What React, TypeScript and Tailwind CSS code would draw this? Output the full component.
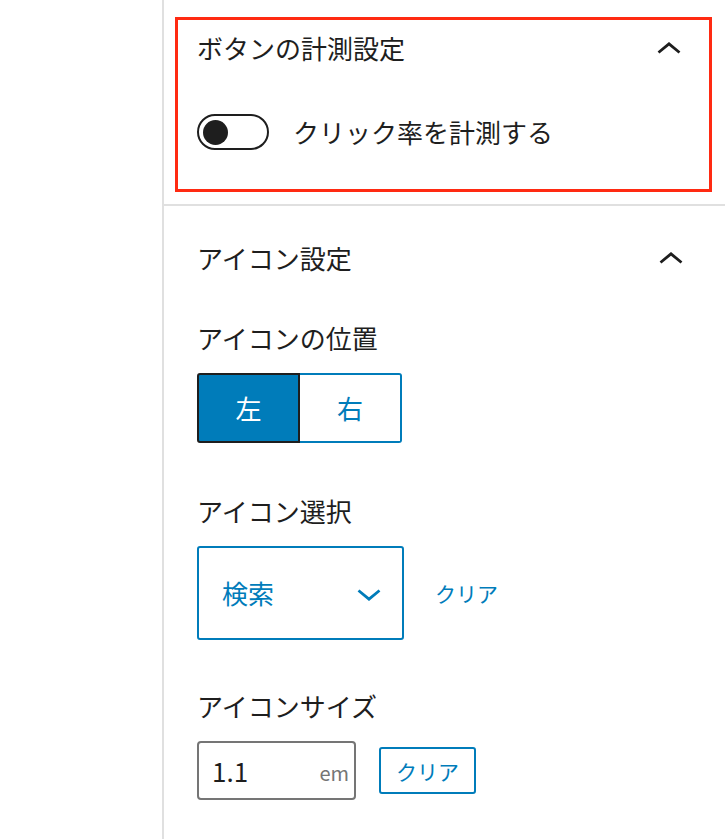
import React from "react";

function ChevronUp({ color = "#1e1e1e" }: { color?: string }) {
  return (
    <svg width="24" height="12" viewBox="0 0 24 12" fill="none">
      <path d="M1.5 10.5 L12 1.8 L22.5 10.5" stroke={color} strokeWidth="2.8" strokeLinejoin="miter" />
    </svg>
  );
}

function ChevronDown({ color = "#007cba" }: { color?: string }) {
  return (
    <svg width="24" height="12" viewBox="0 0 24 12" fill="none">
      <path d="M1.5 1.5 L12 10.2 L22.5 1.5" stroke={color} strokeWidth="2.8" strokeLinejoin="miter" />
    </svg>
  );
}

export default function App() {
  return (
    <div className="flex min-h-[839px] w-[725px] bg-white font-['Noto_Sans_CJK_JP',sans-serif] text-[#1e1e1e]">
      <div className="w-[162px] shrink-0" />
      <div className="flex-1 border-l-2 border-[#e0e0e0]">
        {/* Panel 1 */}
        <div className="border-b-2 border-[#e0e0e0] pl-[11px] pr-[13px] pt-[17px] pb-[12px]">
          <div className="border-[3px] border-[#ff2a12] pl-[19px] pr-[28px] pb-[39px]">
            <div className="flex h-[56px] items-center justify-between">
              <span className="text-[26px] leading-[36px]">ボタンの計測設定</span>
              <ChevronUp />
            </div>
            <div className="mt-[38px] flex items-center gap-[24px]">
              <div className="flex h-[36px] w-[72px] items-center rounded-full border-2 border-[#1e1e1e] pl-[4px]">
                <div className="h-[25px] w-[25px] rounded-full bg-[#1e1e1e]" />
              </div>
              <span className="text-[26px] leading-[36px]">クリック率を計測する</span>
            </div>
          </div>
        </div>

        {/* Panel 2 */}
        <div className="pl-[33px] pr-[42px] pt-[24px]">
          <div className="flex h-[56px] items-center justify-between">
            <span className="text-[26px] leading-[36px]">アイコン設定</span>
            <ChevronUp />
          </div>

          <div className="mt-[34px] text-[26px] leading-[36px]">アイコンの位置</div>
          <div className="mt-[17px] flex h-[70px] w-[205px]">
            <div className="flex w-[103px] items-center justify-center rounded-l-[3px] border-2 border-[#1e1e1e] bg-[#007cba] text-[26px] leading-[36px] text-white">
              左
            </div>
            <div className="flex flex-1 items-center justify-center rounded-r-[3px] border-2 border-l-0 border-[#007cba] text-[26px] leading-[36px] text-[#007cba]">
              右
            </div>
          </div>

          <div className="mt-[50px] text-[26px] leading-[36px]">アイコン選択</div>
          <div className="mt-[17px] flex items-center gap-[31px]">
            <div className="flex h-[94px] w-[207px] items-center justify-between rounded-[3px] border-2 border-[#007cba] pl-[23px] pr-[21px]">
              <span className="text-[26px] leading-[36px] text-[#007cba]">検索</span>
              <div className="mt-[4px]">
                <ChevronDown />
              </div>
            </div>
            <span className="text-[21px] leading-[30px] text-[#007cba]">クリア</span>
          </div>

          <div className="mt-[48px] text-[26px] leading-[36px]">アイコンサイズ</div>
          <div className="mt-[17px] flex items-center gap-[23px]">
            <div className="flex h-[59px] w-[159px] items-center justify-between rounded-[4px] border-2 border-[#757575] pl-[13px] pr-[5px]">
              <span className="text-[26px] leading-[36px] text-[#1e1e1e]">1.1</span>
              <span className="mt-[4px] text-[20px] leading-[28px] text-[#757575]">em</span>
            </div>
            <div className="flex h-[47px] w-[97px] items-center justify-center rounded-[3px] border-2 border-[#007cba] text-[21px] leading-[30px] text-[#007cba]">
              クリア
            </div>
          </div>
        </div>
      </div>
    </div>
  );
}
